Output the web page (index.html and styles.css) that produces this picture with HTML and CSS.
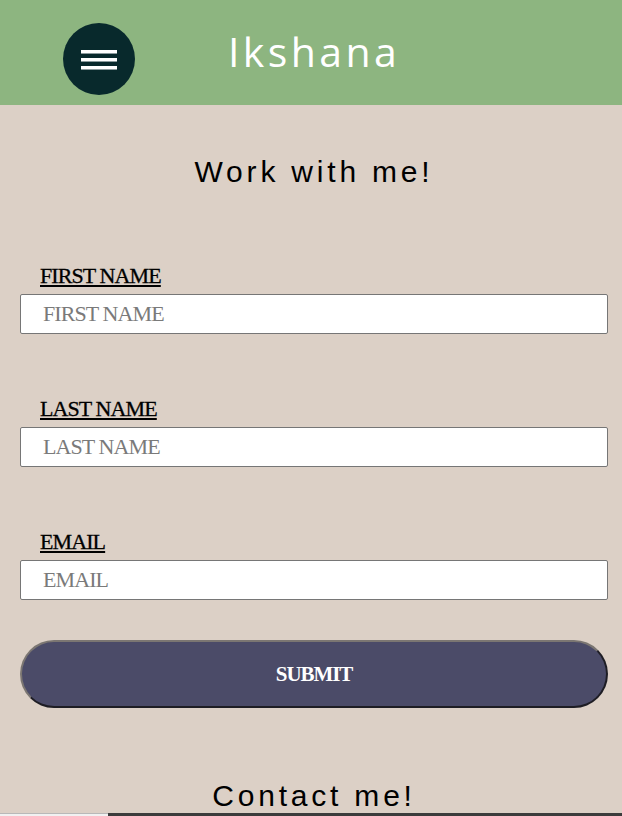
FILE: index.html
```html
<!DOCTYPE html>
<html lang="en">
<head>
<meta charset="utf-8">
<title>Ikshana</title>
<link rel="stylesheet" href="styles.css">
</head>
<body>
<header class="topbar">
  <button class="menu-btn" aria-label="Menu">
    <span class="bar"></span>
    <span class="bar"></span>
    <span class="bar"></span>
  </button>
  <h1 class="brand">Ikshana</h1>
</header>
<main class="content">
  <h2 class="section-title">Work with me!</h2>
  <form class="form">
    <div class="field">
      <label class="field-label" for="fn">FIRST NAME</label>
      <input class="field-input" id="fn" type="text" placeholder="FIRST NAME">
    </div>
    <div class="field">
      <label class="field-label" for="ln">LAST NAME</label>
      <input class="field-input" id="ln" type="text" placeholder="LAST NAME">
    </div>
    <div class="field">
      <label class="field-label" for="em">EMAIL</label>
      <input class="field-input" id="em" type="email" placeholder="EMAIL">
    </div>
    <button class="submit" type="button">SUBMIT</button>
  </form>
  <h2 class="section-title contact-title">Contact me!</h2>
</main>
<div class="strip"><span class="strip-left"></span><span class="strip-right"></span></div>
</body>
</html>
```
FILE: styles.css
```css
html, body {
  margin: 0;
  padding: 0;
}
body {
  background: #dcd0c6;
  font-family: "Liberation Serif", serif;
  color: #000;
}
.topbar {
  height: 105px;
  box-sizing: border-box;
  background: #8db580;
  display: flex;
  align-items: flex-start;
  padding: 23px 0 0 63px;
}
.menu-btn {
  width: 72px;
  height: 72px;
  border-radius: 50%;
  background: #08292c;
  border: none;
  padding: 0;
  display: flex;
  flex-direction: column;
  align-items: center;
  justify-content: center;
  gap: 5px;
}
.bar {
  display: block;
  width: 36px;
  height: 3px;
  background: #fff;
  box-shadow: 0 1px 0 #8a9a9c;
}
.brand {
  margin: 8px 0 0 93px;
  font-family: "Open Sans", sans-serif;
  font-weight: 500;
  font-size: 41px;
  line-height: 41px;
  letter-spacing: 3.4px;
  color: #fff;
}
.content {
  padding: 49px 14px 0 20px;
}
.section-title {
  margin: 0;
  text-align: center;
  font-family: "Liberation Sans", sans-serif;
  font-weight: 400;
  font-size: 30px;
  line-height: 36px;
  letter-spacing: 3.8px;
}
.form {
  display: flex;
  flex-direction: column;
  gap: 62px;
  margin-top: 73px;
}
.field {
  display: flex;
  flex-direction: column;
  gap: 5px;
}
.field-label {
  margin-left: 20px;
  font-size: 22px;
  line-height: 26px;
  letter-spacing: -0.9px;
  -webkit-text-stroke: 0.3px #000;
  text-decoration: underline;
  text-decoration-thickness: 2px;
  text-underline-offset: 2px;
}
.field-input {
  box-sizing: border-box;
  width: 100%;
  height: 40px;
  margin: 0;
  border: 1px solid #767676;
  border-radius: 2px;
  background: #fff;
  padding: 0 0 0 22px;
  font-family: "Liberation Serif", serif;
  font-size: 22px;
  letter-spacing: -0.9px;
  color: #333;
}
.field-input::placeholder {
  color: #7a7a7a;
}
.submit {
  margin-top: -22px;
  height: 68px;
  box-sizing: border-box;
  border-radius: 34px;
  border: 2px solid;
  border-color: #7b7672 #1e1d24 #1e1d24 #7b7672;
  background: #4b4b68;
  color: #fff;
  font-family: "Liberation Serif", serif;
  font-weight: 700;
  font-size: 21px;
  letter-spacing: -1.1px;
}
.contact-title {
  margin-top: 70px;
  line-height: 35px;
}
.strip {
  display: flex;
  height: 3px;
}
.strip-left {
  width: 108px;
  background: #f1f1f1;
  border-top: 1px solid #b8b8b8;
  box-sizing: border-box;
}
.strip-right {
  flex: 1;
  background: #3c3c3c;
}
```
